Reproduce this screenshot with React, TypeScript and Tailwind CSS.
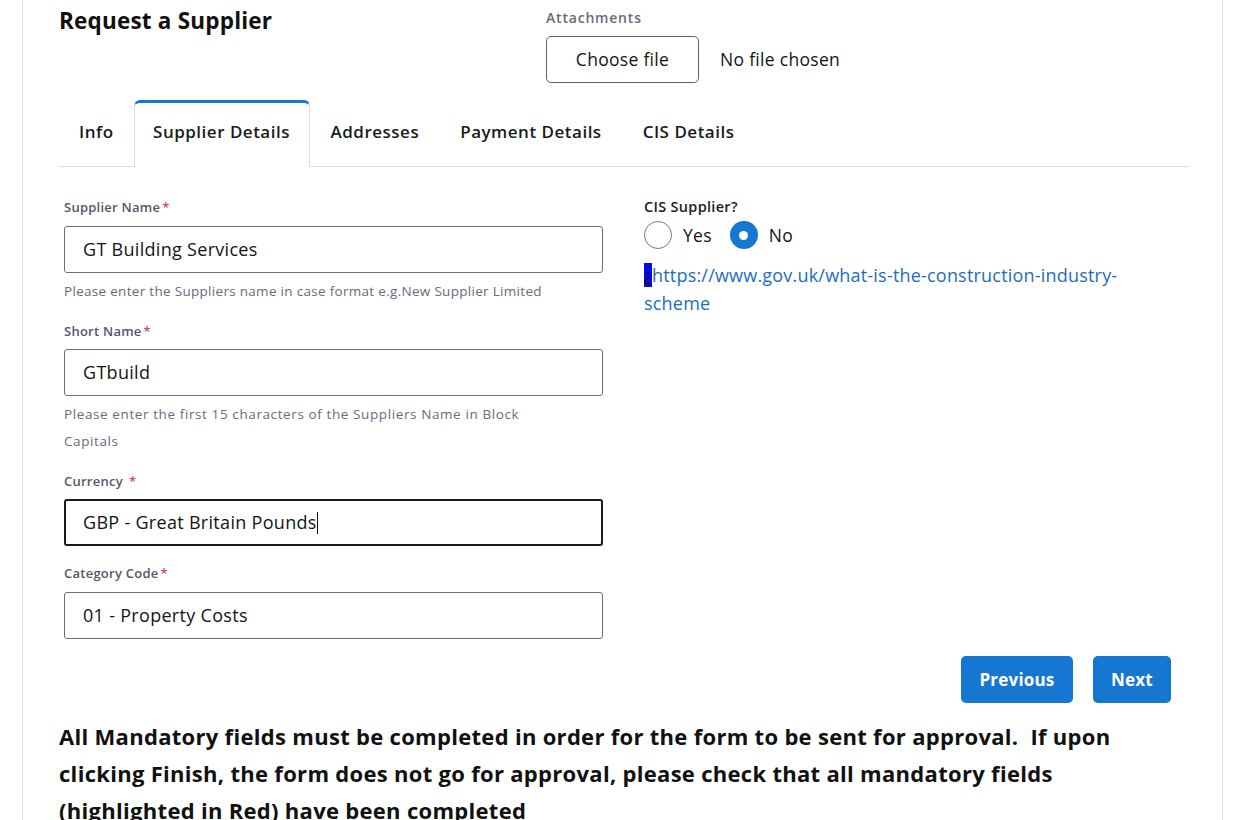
import React from "react";

const FONT = { fontFamily: '"Open Sans", "Liberation Sans", Arial, sans-serif' };

function Label({ text, spaced }: { text: string; spaced?: boolean }) {
  return (
    <div className="text-[13px] leading-[18px] font-semibold tracking-[0.25px] text-[#56566a]">
      {text}
      {spaced ? <span className="text-[#d9455f] ml-[6px]">*</span> : <span className="text-[#d9455f] ml-[2px]">*</span>}
    </div>
  );
}

function Field({ value, focused, caret }: { value: string; focused?: boolean; caret?: boolean }) {
  return (
    <div
      className={`w-[539px] h-[47px] rounded-[3px] flex items-center text-[18px] tracking-[0.3px] text-[#141414] bg-white ${
        focused ? "border-2 border-[#1a1a1a] px-[17px]" : "border border-[#6e6e7a] px-[18px]"
      }`}
    >
      <span>{value}</span>
      {caret && <span className="inline-block w-[1.5px] h-[22px] bg-[#111]" />}
    </div>
  );
}

export default function App() {
  return (
    <div className="min-h-screen bg-white" style={FONT}>
      <div className="ml-[22px] w-[1201px] min-h-[820px] border-l border-r border-[#e4e4e8] pl-[36px] pr-[33px]">
        {/* Header */}
        <div className="flex">
          <div className="w-[487px] pt-[7px]">
            <h1 className="text-[22.5px] leading-[28px] font-bold tracking-[0.2px] text-[#111]">Request a Supplier</h1>
          </div>
          <div className="pt-[9px]">
            <div className="text-[14px] leading-[18px] font-semibold tracking-[0.8px] text-[#6a6a7c] mb-[9px]">Attachments</div>
            <div className="flex items-center">
              <div className="w-[153px] h-[47px] border border-[#5e5e6e] rounded-[5px] flex items-center justify-center text-[17.5px] tracking-[0.3px] text-[#141414]">
                Choose file
              </div>
              <div className="ml-[21px] text-[17.5px] tracking-[0.3px] text-[#141414]">No file chosen</div>
            </div>
          </div>
        </div>

        {/* Tabs */}
        <div className="mt-[17px] flex border-b border-[#dcdce4] h-[67px]">
          <div className="h-[66px] pb-[2px] px-[20px] flex items-center text-[17px] font-semibold tracking-[0.5px] text-[#1a1a1a]">Info</div>
          <div className="h-[67px] -mb-px pb-[6px] flex items-center justify-center text-[17px] font-semibold tracking-[0.5px] text-[#1a1a1a] bg-white border-l border-r border-[#dcdce4] border-t-[3px] border-t-[#1677d2] rounded-t-[6px] w-[176px]">
            Supplier Details
          </div>
          <div className="h-[66px] pb-[2px] px-[21px] flex items-center text-[17px] font-semibold tracking-[0.5px] text-[#1a1a1a]">Addresses</div>
          <div className="h-[66px] pb-[2px] px-[20px] flex items-center text-[17px] font-semibold tracking-[0.5px] text-[#1a1a1a]">Payment Details</div>
          <div className="h-[66px] pb-[2px] px-[21px] flex items-center text-[17px] font-semibold tracking-[0.5px] text-[#1a1a1a]">CIS Details</div>
        </div>

        {/* Form */}
        <div className="flex pl-[5px] pt-[31px]">
          <div className="w-[539px]">
            <Label text="Supplier Name" />
            <div className="mt-[10px]">
              <Field value="GT Building Services" />
            </div>
            <div className="mt-[5px] text-[13.5px] leading-[27px] tracking-[0.3px] text-[#6a6a7c] whitespace-nowrap">
              Please enter the Suppliers name in case format e.g.New Supplier Limited
            </div>

            <div className="mt-[17px]">
              <Label text="Short Name" />
            </div>
            <div className="mt-[9px]">
              <Field value="GTbuild" />
            </div>
            <div className="mt-[5px] text-[13.5px] leading-[27px] tracking-[0.6px] text-[#6a6a7c] whitespace-nowrap">
              Please enter the first 15 characters of the Suppliers Name in Block
              <br />
              Capitals
            </div>

            <div className="mt-[17px]">
              <Label text="Currency" spaced />
            </div>
            <div className="mt-[9px]">
              <Field value="GBP - Great Britain Pounds" focused caret />
            </div>

            <div className="mt-[18px]">
              <Label text="Category Code" />
            </div>
            <div className="mt-[10px]">
              <Field value="01 - Property Costs" />
            </div>
          </div>

          <div className="ml-[41px] flex-1">
            <div className="text-[14.5px] leading-[18px] font-semibold tracking-[0.3px] text-[#1c1c24]">CIS Supplier?</div>
            <div className="mt-[5px] flex items-center h-[28px]">
              <span className="w-[28px] h-[28px] rounded-full border border-[#77777f] bg-white inline-block" />
              <span className="ml-[11px] text-[17.5px] tracking-[0.3px] text-[#141414]">Yes</span>
              <span className="ml-[18px] w-[28px] h-[28px] rounded-full bg-[#1677d2] flex items-center justify-center">
                <span className="w-[9px] h-[9px] rounded-full bg-white" />
              </span>
              <span className="ml-[11px] text-[17.5px] tracking-[0.3px] text-[#141414]">No</span>
            </div>
            <div className="mt-[12px] text-[18px] leading-[28px] tracking-[0.2px] text-[#1b6ec2] whitespace-nowrap">
              <span className="bg-[#0b0be0] text-[#111]">¿</span>
              https://www.gov.uk/what-is-the-construction-industry-
              <br />
              scheme
            </div>
          </div>
        </div>

        {/* Buttons */}
        <div className="mt-[17px] flex justify-end pr-[18px] gap-[20px]">
          <div className="w-[112px] h-[47px] rounded-[5px] bg-[#1677d2] text-white text-[17px] tracking-[0.2px] font-bold flex items-center justify-center">
            Previous
          </div>
          <div className="w-[78px] h-[47px] rounded-[5px] bg-[#1677d2] text-white text-[17px] tracking-[0.2px] font-bold flex items-center justify-center">
            Next
          </div>
        </div>

        {/* Notice */}
        <div className="mt-[15px] text-[22px] leading-[37px] font-bold tracking-[0.3px] text-[#111] whitespace-nowrap">
          All Mandatory fields must be completed in order for the form to be sent for approval.&nbsp; If upon
          <br />
          clicking Finish, the form does not go for approval, please check that all mandatory fields
          <br />
          (highlighted in Red) have been completed
        </div>
      </div>
    </div>
  );
}
